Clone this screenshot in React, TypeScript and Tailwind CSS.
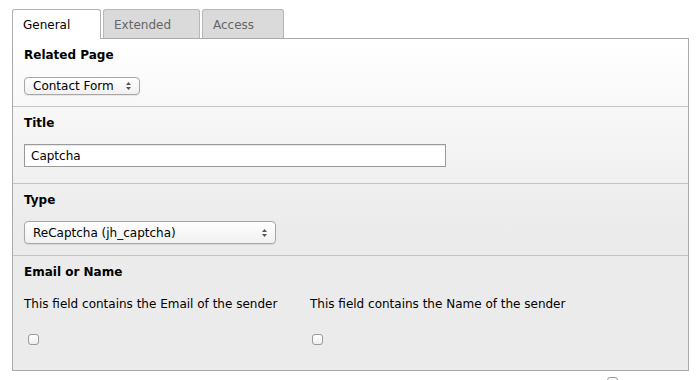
import React from 'react';

const font = "font-['DejaVu_Sans',Verdana,sans-serif]";

function Arrows() {
  return (
    <svg width="7" height="10" viewBox="0 0 7 10" className="shrink-0">
      <path d="M3.5 1 L6 4 L1 4 Z" fill="#555" />
      <path d="M3.5 9 L6 6 L1 6 Z" fill="#555" />
    </svg>
  );
}

function Select({ value, className }: { value: string; className: string }) {
  return (
    <div
      className={`flex items-center justify-between rounded-[4px] border border-[#a6a6a6] bg-gradient-to-b from-white to-[#f1f1f1] pl-[8px] pr-[7px] text-[12px] text-black shadow-[0_1px_1px_rgba(0,0,0,0.08)] ${className}`}
    >
      <span>{value}</span>
      <Arrows />
    </div>
  );
}

function Checkbox() {
  return <div className="h-[11px] w-[11px] rounded-[3px] border border-[#9a9a9a] bg-gradient-to-b from-white to-[#eeeeee]" />;
}

function Tab({ label, active, w }: { label: string; active?: boolean; w: string }) {
  return (
    <div
      className={`flex h-[29px] items-end rounded-t-[3px] border border-b-0 pb-[4px] pl-[10px] text-[12px] ${w} ${
        active
          ? 'relative z-10 -mb-px h-[30px] border-[#b0b0b0] bg-white pb-[5px] text-black'
          : 'border-[#b7b7b7] bg-[#dadada] text-[#666]'
      }`}
    >
      {label}
    </div>
  );
}

export default function App() {
  return (
    <div className={`h-[380px] w-[700px] overflow-hidden bg-white pl-[12px] pt-[9px] ${font}`}>
      <div className="flex gap-[2px]">
        <Tab label="General" active w="w-[89px]" />
        <Tab label="Extended" w="w-[97px]" />
        <Tab label="Access" w="w-[82px]" />
      </div>

      <div className="w-[677px] border border-[#aaaaaa] bg-[linear-gradient(to_bottom,#ffffff_0px,#ebebeb_190px,#ebebeb_100%)]">
        <div className="border-b border-[#c4c4c4] px-[11px] pb-[11px] pt-[9px]">
          <div className="text-[12px] font-bold leading-[14px]">Related Page</div>
          <Select value="Contact Form" className="mt-[15px] h-[18px] w-[116px]" />
        </div>

        <div className="border-b border-[#c4c4c4] px-[11px] pb-[16px] pt-[9px]">
          <div className="text-[12px] font-bold leading-[14px]">Title</div>
          <div className="mt-[14px] flex h-[23px] w-[422px] items-center border border-[#9a9a9a] bg-white pl-[6px] text-[12px] shadow-[inset_0_1px_1px_rgba(0,0,0,0.1)]">
            Captcha
          </div>
        </div>

        <div className="border-b border-[#c4c4c4] px-[11px] pb-[11px] pt-[9px]">
          <div className="text-[12px] font-bold leading-[14px]">Type</div>
          <Select value="ReCaptcha (jh_captcha)" className="mt-[14px] h-[23px] w-[252px]" />
        </div>

        <div className="px-[11px] pb-[25px] pt-[9px]">
          <div className="text-[12px] font-bold leading-[14px]">Email or Name</div>
          <div className="mt-[18px] flex">
            <div className="w-[286px]">
              <div className="text-[12px] leading-[14px]">This field contains the Email of the sender</div>
              <div className="mt-[23px] pl-[4px]">
                <Checkbox />
              </div>
            </div>
            <div>
              <div className="text-[12px] leading-[14px]">This field contains the Name of the sender</div>
              <div className="mt-[23px] pl-[2px]">
                <Checkbox />
              </div>
            </div>
          </div>
        </div>
      </div>

      <div className="ml-[595px] mt-[6px]">
        <Checkbox />
      </div>
    </div>
  );
}
